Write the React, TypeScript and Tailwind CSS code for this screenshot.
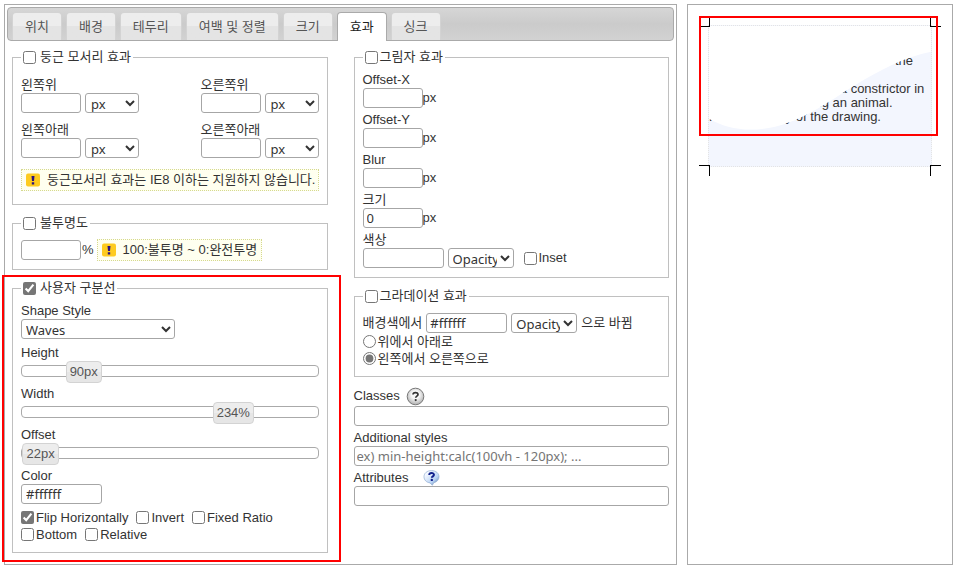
import { useState } from 'react';
import type { ReactNode } from 'react';

const fieldClasses =
  "h-5 rounded-[3px] border border-[#a6a6a6] bg-white font-['Noto_Sans'] text-[13px] leading-4 text-[#333]";

const tabs = ['위치', '배경', '테두리', '여백 및 정렬', '크기', '효과', '싱크'];

function TabBar() {
  const [active, setActive] = useState('효과');

  return (
    <div
      role="tablist"
      className="flex h-[34px] items-end gap-1 rounded border border-[#aaa] bg-linear-to-b from-[#d6d6d6] via-[#cbcbcb] to-[#d2d2d2] px-1"
    >
      {tabs.map((tab) => (
        <button
          key={tab}
          type="button"
          role="tab"
          aria-selected={tab === active}
          onClick={() => setActive(tab)}
          className={
            tab === active
              ? 'relative -mb-px h-[29px] shrink-0 rounded-t border border-b-0 border-[#aaa] bg-white px-3 pb-px text-[#212121]'
              : 'h-7 shrink-0 rounded-t border border-b-0 border-[#d3d3d3] bg-linear-to-b from-[#ededed] from-50% to-[#e4e4e4] to-50% px-3 text-[#555]'
          }
        >
          {tab}
        </button>
      ))}
    </div>
  );
}

interface CheckProps {
  label: string;
  checked?: boolean;
  spaced?: boolean;
}

function Check({ label, checked, spaced }: CheckProps) {
  return (
    <label className={`flex items-center ${spaced ? 'gap-1' : 'gap-0.5'}`}>
      <input type="checkbox" defaultChecked={checked} className="size-[13px] accent-[#767676]" />
      {label}
    </label>
  );
}

interface GroupProps extends CheckProps {
  className: string;
  children: ReactNode;
}

function Group({ label, checked, spaced, className, children }: GroupProps) {
  return (
    <fieldset className={`min-w-0 border border-[#c0c0c0] px-2 ${className}`}>
      <legend className="h-[18px] px-0.5 leading-[18px]">
        <Check label={label} checked={checked} spaced={spaced} />
      </legend>
      {children}
    </fieldset>
  );
}

function Corner({ label, id }: { label: string; id: string }) {
  return (
    <div>
      <label htmlFor={id} className="block leading-4">
        {label}
      </label>
      <div className="flex gap-1">
        <input id={id} type="text" className={`${fieldClasses} w-[60px] px-1`} />
        <select aria-label={`${label} 단위`} className={`${fieldClasses} w-[54px] px-px`}>
          <option>px</option>
          <option>%</option>
        </select>
      </div>
    </div>
  );
}

function PxField({ label, id, value }: { label: string; id: string; value?: string }) {
  return (
    <div>
      <label htmlFor={id} className="block leading-4">
        {label}
      </label>
      <div className="flex items-center">
        <input id={id} type="text" defaultValue={value} className={`${fieldClasses} w-[60px] px-[3px]`} />
        px
      </div>
    </div>
  );
}

function OpacitySelect() {
  return (
    <select aria-label="Opacity" className={`${fieldClasses} w-[66px]`}>
      <option>Opacity</option>
      <option>50%</option>
      <option>100%</option>
    </select>
  );
}

function Notice({ children }: { children: ReactNode }) {
  return (
    <p className="flex h-[22px] items-center gap-[7px] border border-dotted border-[#d5d990] bg-[#ffffef] px-1 whitespace-nowrap">
      <svg width="14" height="14" viewBox="0 0 14 14" className="shrink-0" aria-hidden="true">
        <rect y="0.5" width="14" height="13" rx="2" fill="#fecb1f" />
        <path d="M5.5 3h3l-.5 5h-2zM5.8 9.3h2.4v2.2H5.8z" fill="#2b1280" />
      </svg>
      {children}
    </p>
  );
}

interface SliderProps {
  label: string;
  id: string;
  min: number;
  max: number;
  start: number;
  unit: string;
}

function Slider({ label, id, min, max, start, unit }: SliderProps) {
  const [value, setValue] = useState(start);
  const percent = ((value - min) / (max - min)) * 100;

  return (
    <div>
      <label htmlFor={id} className="block leading-4">
        {label}
      </label>
      <div className="relative flex h-[21px] items-center">
        <input
          id={id}
          type="range"
          min={min}
          max={max}
          value={value}
          onChange={(e) => setValue(Number(e.target.value))}
          className="h-3 w-full appearance-none rounded border border-[#aaa] bg-white [&::-webkit-slider-thumb]:opacity-0"
        />
        <output
          htmlFor={id}
          className="pointer-events-none absolute top-0 flex h-[22px] items-center rounded border border-[#d3d3d3] bg-linear-to-b from-[#ededed] from-50% to-[#e6e6e6] to-50% px-[3px] text-[#555]"
          style={{ left: `${percent}%` }}
        >
          {value}
          {unit}
        </output>
      </div>
    </div>
  );
}

function GreyHelpIcon() {
  return (
    <svg width="19" height="19" viewBox="0 0 19 19" aria-hidden="true">
      <defs>
        <radialGradient id="greyHelp" cx="50%" cy="40%" r="60%">
          <stop offset="0.4" stopColor="#f7f7f7" />
          <stop offset="1" stopColor="#adadad" />
        </radialGradient>
      </defs>
      <circle cx="9.5" cy="9.5" r="8.3" fill="url(#greyHelp)" stroke="#777" />
      <path d="M7 7.6C7 4.9 12 4.9 12 7.5c0 1.6-2.3 1.7-2.3 3.3" fill="none" stroke="#333" strokeWidth="1.7" />
      <circle cx="9.7" cy="13.1" r="1.1" fill="#333" />
    </svg>
  );
}

function BlueHelpIcon() {
  return (
    <svg width="17" height="16" viewBox="0 0 17 16" aria-hidden="true">
      <defs>
        <linearGradient id="blueHelp" x1="0" y1="0" x2="1" y2="1">
          <stop offset="0.2" stopColor="#f4f8ff" />
          <stop offset="0.65" stopColor="#b9d3f4" />
          <stop offset="1" stopColor="#456a9f" />
        </linearGradient>
      </defs>
      <path
        d="M8.5.6c4.4 0 7.5 2.6 7.5 6.1 0 3-2.1 5.3-5.2 6L9.3 15.3 7 12.9C3.400 12.400 1 10 1 6.700 1 3.200 4.100.600 8.500.600z"
        fill="url(#blueHelp)"
        stroke="#91acd0"
        strokeWidth="0.7"
      />
      <path d="M6.200 5C6.200 2.300 11 2.400 11 4.800c0 1.500-2.200 1.600-2.200 3" fill="none" stroke="#11208c" strokeWidth="1.900" />
      <circle cx="8.800" cy="9.900" r="1.200" fill="#11208c" />
    </svg>
  );
}

function Preview() {
  return (
    <aside className="border border-[#aaa] pt-[11px] pr-3.5 pl-[11px]">
      <div className="relative h-[160px]">
        <div className="absolute top-[9px] right-1.5 left-[9px] h-[142px] overflow-hidden border border-dotted border-[#e4e4e4] bg-[#f3f6fe] leading-3.5">
          <p>
            Once when I was six years old I saw a
            <br />
            magnificent picture in a book, called
            <br />
            True Stories from Nature, about the
            <br />
            primeval forest.
          </p>
          <p className="whitespace-nowrap">
            It was a picture of a boa constrictor in
            <br />
            the act of swallowing an animal.
            <br />
            Here is a copy of the drawing.
          </p>
          <svg
            viewBox="0 0 224 142"
            preserveAspectRatio="none"
            className="absolute inset-0 size-full"
            aria-hidden="true"
          >
            <path d="M0 0H224V26C198 31 172 45 147 60C117 79 84 105 42 105C26 105 12 101 0 94Z" fill="#fff" />
          </svg>
        </div>
        {/* crop marks */}
        <span className="absolute top-0.5 left-0 h-[9px] w-[11px] border-r border-b border-black" />
        <span className="absolute top-0.5 right-[-3px] h-[9px] w-[11px] border-b border-l border-black" />
        <span className="absolute bottom-0 left-0 h-[11px] w-[11px] border-t border-r border-black" />
        <span className="absolute right-[-3px] bottom-0 h-[11px] w-[11px] border-t border-l border-black" />
        <span className="absolute inset-x-0 top-0 h-[120px] border-2 border-[#f00]" />
      </div>
    </aside>
  );
}

export default function App() {
  return (
    <main className="grid grid-cols-[minmax(0,1fr)_266px] gap-2.5 bg-white p-1 font-['Liberation_Sans','Noto_Sans_CJK_KR',sans-serif] text-[13px] text-[#333]">
      <section className="border border-[#aaa] p-0.5">
        <TabBar />
        <div className="grid grid-cols-2 gap-[26px] px-[5px] pt-[7px] pb-[9px]">
          <div className="flex min-w-0 flex-col gap-[9px]">
            <Group label="둥근 모서리 효과" spaced className="pt-[11px] pb-[13px]">
              <div className="flex flex-col gap-[9px]">
                <div className="flex justify-between">
                  <Corner label="왼쪽위" id="top-left" />
                  <Corner label="오른쪽위" id="top-right" />
                </div>
                <div className="flex justify-between">
                  <Corner label="왼쪽아래" id="bottom-left" />
                  <Corner label="오른쪽아래" id="bottom-right" />
                </div>
              </div>
              <div className="mt-[11px]">
                <Notice>둥근모서리 효과는 IE8 이하는 지원하지 않습니다.</Notice>
              </div>
            </Group>

            <Group label="불투명도" spaced className="pt-2 pb-[9px]">
              <div className="flex h-5 items-center">
                <input type="text" aria-label="불투명도" className={`${fieldClasses} w-[60px] px-1`} />
                <span className="mr-[3px] ml-px">%</span>
                <Notice>100:불투명 ~ 0:완전투명</Notice>
              </div>
            </Group>

            <div className="relative">
              <Group label="사용자 구분선" checked spaced className="pt-1.5 pb-[9px]">
                <div className="flex flex-col gap-1">
                  <div>
                    <label htmlFor="shape" className="block leading-4">
                      Shape Style
                    </label>
                    <select id="shape" className={`${fieldClasses} w-[154px]`}>
                      <option>Waves</option>
                      <option>Triangle</option>
                    </select>
                  </div>
                  <Slider label="Height" id="height" min={0} max={600} start={90} unit="px" />
                  <Slider label="Width" id="width" min={100} max={308} start={234} unit="%" />
                  <Slider label="Offset" id="offset" min={20} max={420} start={22} unit="px" />
                  <div>
                    <label htmlFor="color" className="block leading-4">
                      Color
                    </label>
                    <input id="color" type="text" defaultValue="#ffffff" className={`${fieldClasses} w-[81px] px-1`} />
                  </div>
                </div>
                <div className="mt-[5px] flex flex-wrap gap-x-2 leading-[17px]">
                  <Check label="Flip Horizontally" checked />
                  <Check label="Invert" />
                  <Check label="Fixed Ratio" />
                  <Check label="Bottom" />
                  <Check label="Relative" />
                </div>
              </Group>
              <span className="pointer-events-none absolute -top-1 -right-[13px] -bottom-[9px] -left-2.5 border-2 border-[#f00]" />
            </div>
          </div>

          <div className="flex min-w-0 flex-col gap-[9px]">
            <Group label="그림자 효과" className="pt-1.5 pb-[9px]">
              <div className="flex flex-col gap-1">
                <PxField label="Offset-X" id="offset-x" />
                <PxField label="Offset-Y" id="offset-y" />
                <PxField label="Blur" id="blur" />
                <PxField label="크기" id="spread" value="0" />
                <div>
                  <label htmlFor="shadow-color" className="block leading-4">
                    색상
                  </label>
                  <div className="flex items-center gap-1">
                    <input id="shadow-color" type="text" className={`${fieldClasses} w-[81px] px-1`} />
                    <OpacitySelect />
                    <div className="ml-1.5">
                      <Check label="Inset" />
                    </div>
                  </div>
                </div>
              </div>
            </Group>

            <Group label="그라데이션 효과" className="pt-2 pb-[9px]">
              <div className="flex items-center gap-1">
                <label htmlFor="gradient-color">배경색에서</label>
                <input id="gradient-color" type="text" defaultValue="#ffffff" className={`${fieldClasses} w-[81px] px-[3px]`} />
                <OpacitySelect />
                <span>으로 바뀜</span>
              </div>
              <label className="flex items-center gap-0.5 leading-[17px]">
                <input type="radio" name="direction" className="size-[13px] accent-[#767676]" />
                위에서 아래로
              </label>
              <label className="flex items-center gap-0.5 leading-[17px]">
                <input type="radio" name="direction" defaultChecked className="size-[13px] accent-[#767676]" />
                왼쪽에서 오른쪽으로
              </label>
            </Group>

            <div className="flex flex-col gap-1">
              <div>
                <div className="flex h-5 items-center gap-1.5">
                  <label htmlFor="classes">Classes</label>
                  <button type="button" aria-label="Classes help">
                    <GreyHelpIcon />
                  </button>
                </div>
                <input id="classes" type="text" className={`${fieldClasses} block w-full px-[3px]`} />
              </div>
              <div>
                <label htmlFor="styles" className="block leading-4">
                  Additional styles
                </label>
                <input
                  id="styles"
                  type="text"
                  placeholder="ex) min-height:calc(100vh - 120px); ..."
                  className={`${fieldClasses} block w-full px-0.5 placeholder:text-[#757575]`}
                />
              </div>
              <div>
                <div className="flex h-4 items-center gap-[15px]">
                  <label htmlFor="attributes">Attributes</label>
                  <button type="button" aria-label="Attributes help">
                    <BlueHelpIcon />
                  </button>
                </div>
                <input id="attributes" type="text" className={`${fieldClasses} block w-full px-[3px]`} />
              </div>
            </div>
          </div>
        </div>
      </section>

      <Preview />
    </main>
  );
}
